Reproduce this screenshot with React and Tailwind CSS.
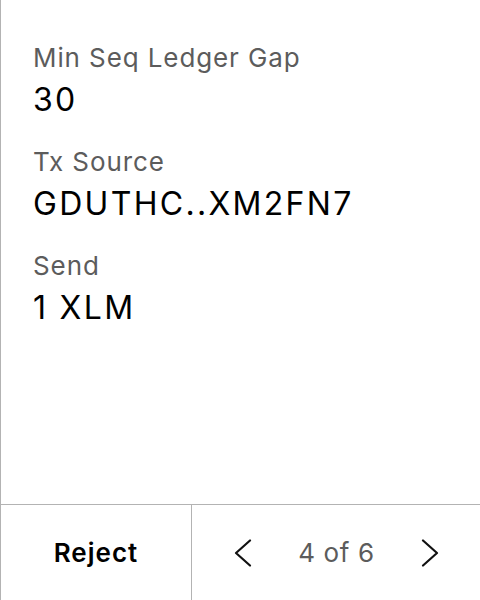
const rows = [
  { label: "Min Seq Ledger Gap", value: "30" },
  { label: "Tx Source", value: "GDUTHC..XM2FN7" },
  { label: "Send", value: "1 XLM" },
];

function Chevron({ dir }) {
  return (
    <svg width="18" height="28" viewBox="0 0 18 28" fill="none">
      <path
        d={dir === "left" ? "M16 1.5 L2 14 L16 26.5" : "M2 1.5 L16 14 L2 26.5"}
        stroke="#111"
        strokeWidth="2.2"
        strokeLinecap="round"
        strokeLinejoin="round"
      />
    </svg>
  );
}

export default function App() {
  return (
    <div
      className="flex flex-col w-[480px] h-[600px] bg-white border-l border-[#b3b3b3] text-black"
      style={{ fontFamily: "Inter, 'Liberation Sans', sans-serif" }}
    >
      <div className="flex-1 px-8 pt-[40px]">
        {rows.map((r) => (
          <div key={r.label} className="mb-[22px]">
            <div className="text-[26px] leading-[36px] tracking-[0.9px] text-[#5c5c5c]">{r.label}</div>
            <div className="text-[32px] leading-[44px] tracking-[2.3px] mt-[2px]">{r.value}</div>
          </div>
        ))}
      </div>
      <div className="flex h-[96px] border-t border-[#b3b3b3]">
        <button className="w-[191px] flex items-center justify-center text-[26px] font-semibold tracking-[1px] border-r border-[#b3b3b3]">
          Reject
        </button>
        <div className="flex-1 flex items-center justify-between pl-[42px] pr-[41px]">
          <Chevron dir="left" />
          <span className="text-[26px] tracking-[0.6px] text-[#5c5c5c]">4 of 6</span>
          <Chevron dir="right" />
        </div>
      </div>
    </div>
  );
}
